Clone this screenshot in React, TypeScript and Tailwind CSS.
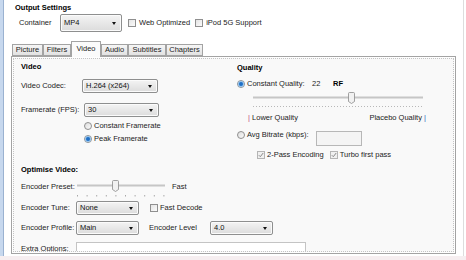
import React from 'react';

const font = { fontFamily: '"Liberation Sans", Arial, sans-serif' };

// small win7-style dropdown
const Combo = ({ value, className }: { value: string; className: string }) => (
  <div
    className={`flex items-center justify-between rounded-[2px] border border-[#8e8f8f] bg-gradient-to-b from-[#f4f4f4] to-[#dcdcdc] pl-[3px] pr-[5px] text-[#111] shadow-[inset_0_0_0_1px_#fbfbfb] ${className}`}
  >
    <span>{value}</span>
    <span className="h-0 w-0 border-x-[2.5px] border-t-[3px] border-x-transparent border-t-[#111]" />
  </div>
);

const Check = ({ checked, disabled }: { checked?: boolean; disabled?: boolean }) => (
  <span
    className={`flex h-[8px] w-[8px] shrink-0 items-center justify-center border ${
      disabled ? 'border-[#b5b5b5] bg-[#f0f0f0]' : 'border-[#8f8f8f] bg-gradient-to-br from-[#e4e4e4] to-[#fbfbfb]'
    }`}
  >
    {checked && (
      <svg width="6" height="6" viewBox="0 0 6 6">
        <path d="M0.8 3.2 L2.3 4.7 L5.2 1" stroke="#8a8a8a" strokeWidth="1" fill="none" />
      </svg>
    )}
  </span>
);

const Radio = ({ checked }: { checked?: boolean }) => (
  <span className="flex h-[8px] w-[8px] shrink-0 items-center justify-center rounded-full border border-[#8f8f8f] bg-gradient-to-br from-[#dedede] to-[#fafafa]">
    {checked && <span className="h-[4px] w-[4px] rounded-full bg-[#1f6fc6] shadow-[0_0_1px_1px_#8cc0ee]" />}
  </span>
);

const Thumb = ({ x, y }: { x: number; y: number }) => (
  <path
    d={`M${x} ${y + 1} Q${x} ${y} ${x + 1} ${y} H${x + 5} Q${x + 6} ${y} ${x + 6} ${y + 1} V${y + 9} L${x + 3} ${y + 11} L${x} ${y + 9} Z`}
    fill="#f1f1f1"
    stroke="#8a8a8a"
    strokeWidth="0.8"
  />
);

const Tab = ({ label, active, className }: { label: string; active?: boolean; className: string }) => (
  <div
    className={`flex items-center justify-center border border-[#a3a3a3] ${
      active
        ? 'relative z-10 -mb-[1px] h-[16px] self-end border-b-0 bg-[#fbfbfb] pb-[2px]'
        : 'h-[12px] self-end bg-gradient-to-b from-[#f6f6f6] to-[#e2e2e2]'
    } ${className}`}
  >
    {label}
  </div>
);

export default function App() {
  const presetTicks = [0, 9.6, 19.2, 28.8, 38.4, 48, 57.6, 67.2, 76.8, 86.4];
  return (
    <div style={font} className="flex h-[260px] w-[466px] flex-col overflow-hidden bg-white text-[7.5px] leading-[10px] text-[#1c1c1c]">
      <div className="flex h-[256px]">
        {/* window edge */}
        <div className="w-[4px] shrink-0 border-r border-[#9bb2d1] bg-[#c7d8ee]" />

        <div className="flex w-[459px] flex-col pl-[7px] pt-[3px]">
          <div className="ml-[4px] h-[10px] font-bold text-black">Output Settings</div>

          {/* container row */}
          <div className="mt-[1px] flex h-[18px] items-center pl-[8px]">
            <span className="w-[41px]">Container</span>
            <Combo value="MP4" className="h-[18px] w-[62px]" />
            <span className="ml-[6px] flex items-center gap-[3px]">
              <Check />
              Web Optimized
            </span>
            <span className="ml-[5px] flex items-center gap-[3px]">
              <Check />
              iPod 5G Support
            </span>
          </div>

          {/* tabs */}
          <div className="mt-[10px] flex h-[14px] pl-[1px]">
            <Tab label="Picture" className="w-[31px]" />
            <Tab label="Filters" className="w-[28px]" />
            <Tab label="Video" active className="w-[30px]" />
            <Tab label="Audio" className="w-[27px]" />
            <Tab label="Subtitles" className="w-[38px]" />
            <Tab label="Chapters" className="w-[37px]" />
          </div>

          {/* tab panel */}
          <div className="h-[198px] w-[445px] border border-[#a3a3a3] bg-white">
            <div className="m-[1px] h-[194px] overflow-hidden border border-dotted border-[#c4c4c4] bg-[#f9f9f9]">
              {/* video + quality */}
              <div className="flex h-[106px]">
                <div className="flex w-[223px] flex-col pl-[7px] pt-[3px]">
                  <div className="h-[10px] font-bold text-black">Video</div>
                  <div className="mt-[7px] flex h-[14px] items-center">
                    <span className="w-[61px]">Video Codec:</span>
                    <Combo value="H.264 (x264)" className="h-[14px] w-[76px]" />
                  </div>
                  <div className="mt-[10px] flex h-[14px] items-center">
                    <span className="w-[63px]">Framerate (FPS):</span>
                    <Combo value="30" className="h-[14px] w-[75px]" />
                  </div>
                  <div className="mt-[4px] flex h-[10px] items-center gap-[2px] pl-[63px]">
                    <Radio />
                    <span>Constant Framerate</span>
                  </div>
                  <div className="mt-[3px] flex h-[10px] items-center gap-[2px] pl-[63px]">
                    <Radio checked />
                    <span>Peak Framerate</span>
                  </div>
                </div>

                <div className="flex flex-1 flex-col pt-[4px]">
                  <div className="h-[10px] font-bold text-black">Quality</div>
                  <div className="mt-[6px] flex h-[10px] items-center">
                    <Radio checked />
                    <span className="ml-[2px] w-[65px]">Constant Quality:</span>
                    <span className="w-[21px]">22</span>
                    <span className="font-bold text-black">RF</span>
                  </div>
                  <svg width="172" height="16" className="ml-[16px] mt-[3px]">
                    <line x1="0" y1="5.5" x2="170" y2="5.5" stroke="#c6c6c6" strokeWidth="2" />
                    <line x1="0" y1="14.5" x2="170" y2="14.5" stroke="#b8b8b8" strokeWidth="1" strokeDasharray="1 2" />
                    <Thumb x={95.5} y={0.5} />
                  </svg>
                  <div className="ml-[11px] mt-[5px] flex h-[10px] w-[178px] justify-between">
                    <span>
                      <span className="text-[#c0407a]">|</span> Lower Quality
                    </span>
                    <span>
                      Placebo Quality <span className="text-[#1f5fb8]">|</span>
                    </span>
                  </div>
                  <div className="mt-[7px] flex h-[15px] items-start">
                    <span className="flex h-[10px] items-center gap-[2px]">
                      <Radio />
                      <span className="w-[68px]">Avg Bitrate (kbps):</span>
                    </span>
                    <span className="ml-[1px] mt-[1px] h-[15px] w-[46px] border border-[#b7b7b7] bg-[#f4f4f4]" />
                  </div>
                  <div className="mt-[5px] flex h-[10px] items-center pl-[20px]">
                    <Check checked disabled />
                    <span className="ml-[2px]">2-Pass Encoding</span>
                    <span className="ml-[6px]">
                      <Check checked disabled />
                    </span>
                    <span className="ml-[2px]">Turbo first pass</span>
                  </div>
                </div>
              </div>

              {/* optimise video */}
              <div className="flex flex-col pl-[7px]">
                <div className="h-[10px] font-bold text-black">Optimise Video:</div>
                <div className="mt-[5px] flex h-[14px] items-start">
                  <span className="w-[56px] leading-[14px]">Encoder Preset:</span>
                  <svg width="90" height="18" className="shrink-0">
                    <line x1="0" y1="5.5" x2="88" y2="5.5" stroke="#c6c6c6" strokeWidth="2" />
                    {presetTicks.map((t) => (
                      <rect key={t} x={t} y="15" width="1" height="1.5" fill="#a8a8a8" />
                    ))}
                    <Thumb x={35.5} y={0.5} />
                  </svg>
                  <span className="ml-[5px] leading-[14px]">Fast</span>
                </div>
                <div className="mt-[7px] flex h-[14px] items-center">
                  <span className="w-[55px]">Encoder Tune:</span>
                  <Combo value="None" className="h-[14px] w-[63px]" />
                  <span className="ml-[11px] flex items-center gap-[2px]">
                    <Check />
                    Fast Decode
                  </span>
                </div>
                <div className="mt-[6px] flex h-[14px] items-center">
                  <span className="w-[55px]">Encoder Profile:</span>
                  <Combo value="Main" className="h-[14px] w-[63px]" />
                  <span className="ml-[10px] w-[61px]">Encoder Level</span>
                  <Combo value="4.0" className="h-[14px] w-[63px]" />
                </div>
                <div className="mt-[7px] flex h-[14px] items-center">
                  <span className="w-[55px]">Extra Options:</span>
                  <span className="h-[14px] w-[230px] border border-[#c4c4c4] bg-white" />
                </div>
              </div>
            </div>
          </div>
        </div>

        <div className="w-[1px] shrink-0 bg-[#dddddd]" />
      </div>
      <div className="h-[4px] bg-[#f6eef0]" />
    </div>
  );
}
